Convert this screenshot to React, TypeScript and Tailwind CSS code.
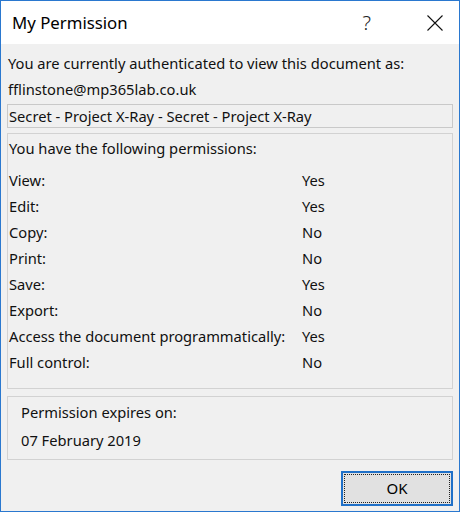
const permissions: [string, string][] = [
  ["View:", "Yes"],
  ["Edit:", "Yes"],
  ["Copy:", "No"],
  ["Print:", "No"],
  ["Save:", "Yes"],
  ["Export:", "No"],
  ["Access the document programmatically:", "Yes"],
  ["Full control:", "No"],
]

const font = "font-['Noto_Sans','Open_Sans',sans-serif]"

export default function App() {
  return (
    <div className={`w-[460px] h-[512px] border border-[#2a78cf] bg-[#f0f0f0] flex flex-col text-[14.7px] text-[#111] ${font}`}>
      {/* title bar */}
      <div className="h-[43px] bg-white flex items-center shrink-0">
        <span className="ml-[11px] mt-[2px] text-[16.8px] text-black leading-none">My Permission</span>
        <span className="ml-auto mr-[56px] text-[20px] font-light text-[#222] leading-none">?</span>
        <svg width="16" height="16" viewBox="0 0 16 16" className="mr-[16px]">
          <path d="M0.5 0.5 L15.5 15.5 M15.5 0.5 L0.5 15.5" stroke="#111" strokeWidth="1.1" fill="none" />
        </svg>
      </div>

      <div className="flex flex-col flex-1 px-[6px] pt-[6px]">
        <div className="pl-[1px] leading-[26px]">You are currently authenticated to view this document as:</div>
        <div className="pl-[1px] leading-[26px]">fflinstone@mp365lab.co.uk</div>

        <div className="mt-[2px] h-[24px] border border-[#c9c9c9] pl-[1px] flex items-center">
          Secret - Project X-Ray - Secret - Project X-Ray
        </div>

        <div className="mt-[5px] h-[256px] border border-[#d2d2d2] pt-[1px] pl-[1px]">
          <div className="leading-[26px]">You have the following permissions:</div>
          <div className="mt-[6px] grid grid-cols-[293px_1fr]">
            {permissions.map(([label, value]) => (
              <div key={label} className="contents">
                <div className="leading-[26px]">{label}</div>
                <div className="leading-[26px]">{value}</div>
              </div>
            ))}
          </div>
        </div>

        <div className="mt-[7px] h-[64px] border border-[#d2d2d2] pt-[1px] pl-[13px]">
          <div className="leading-[28px]">Permission expires on:</div>
          <div className="leading-[28px]">07 February 2019</div>
        </div>

        <div className="mt-[11px] flex justify-end">
          <button className="w-[112px] h-[35px] border-2 border-[#1f70c8] bg-[#e1e1e1] p-[1px]">
            <div className="w-full h-full border border-dotted border-[#222] flex items-center justify-center text-[15px] text-black">
              OK
            </div>
          </button>
        </div>
      </div>
    </div>
  )
}
